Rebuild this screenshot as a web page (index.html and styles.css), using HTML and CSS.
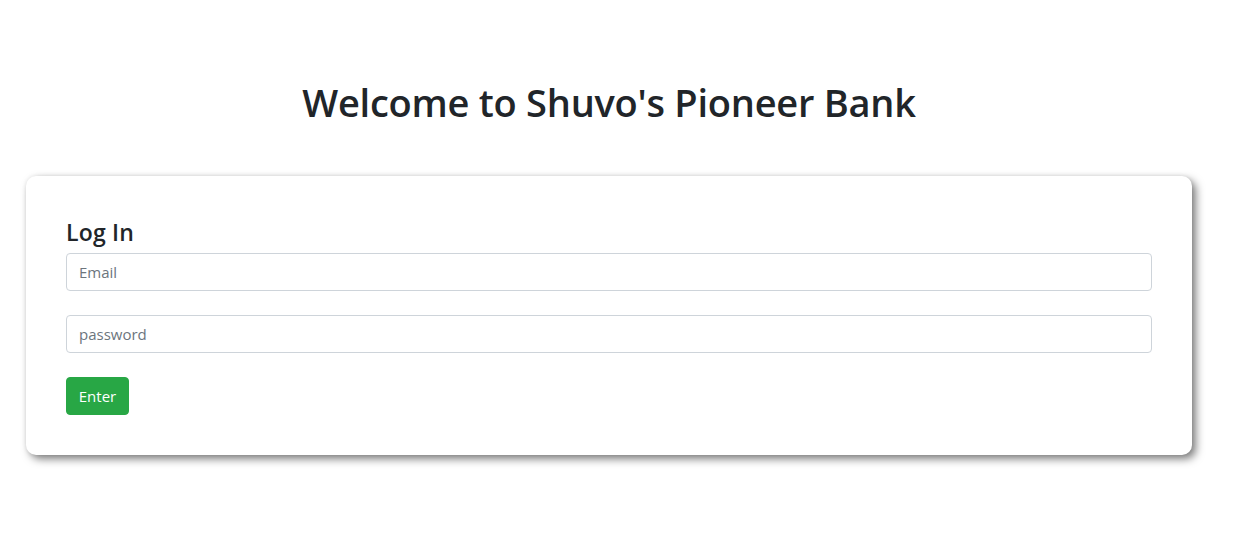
FILE: index.html
```html
<!DOCTYPE html>
<html lang="en">
<head>
<meta charset="utf-8">
<title>Shuvo's Pioneer Bank</title>
<link rel="stylesheet" href="styles.css">
</head>
<body>
<main class="page">
  <h1 class="title">Welcome to Shuvo's Pioneer Bank</h1>
  <section class="card">
    <h2 class="card-title">Log In</h2>
    <form class="login">
      <input class="field" type="email" placeholder="Email">
      <input class="field" type="password" placeholder="password">
      <button class="btn" type="button">Enter</button>
    </form>
  </section>
</main>
</body>
</html>
```
FILE: styles.css
```css
* { box-sizing: border-box; }
html, body { margin: 0; background: #fff; }
body {
  font-family: "Open Sans", "Noto Sans", sans-serif;
  color: #212529;
  font-size: 16px;
  line-height: 1.5;
}
.page {
  padding: 78px 47px 70px 26px;
}
.title {
  margin: 0 0 50px;
  text-align: center;
  font-size: 38px;
  font-weight: 600;
  line-height: 48px;
  letter-spacing: -0.25px;
}
.card {
  background: #fff;
  border-radius: 10px;
  padding: 40px 40px 40px;
  box-shadow: 4px 4px 8px rgba(0,0,0,0.5), 0 0 4px rgba(0,0,0,0.08);
}
.card-title {
  margin: 0 0 5px;
  font-size: 23px;
  font-weight: 600;
  line-height: 32px;
  letter-spacing: 0.2px;
}
.login {
  display: flex;
  flex-direction: column;
  align-items: flex-start;
  gap: 24px;
}
.field {
  width: 100%;
  height: 38px;
  padding: 6px 12px;
  border: 1px solid #ced4da;
  border-radius: 4px;
  font-family: inherit;
  font-size: 15px;
  color: #495057;
  background: #fff;
}
.field::placeholder { color: #6c757d; }
.btn {
  height: 38px;
  width: 63px;
  padding: 0;
  border: 1px solid #28a745;
  border-radius: 4px;
  background: #28a745;
  color: #fff;
  font-family: inherit;
  font-size: 15px;
}
```
